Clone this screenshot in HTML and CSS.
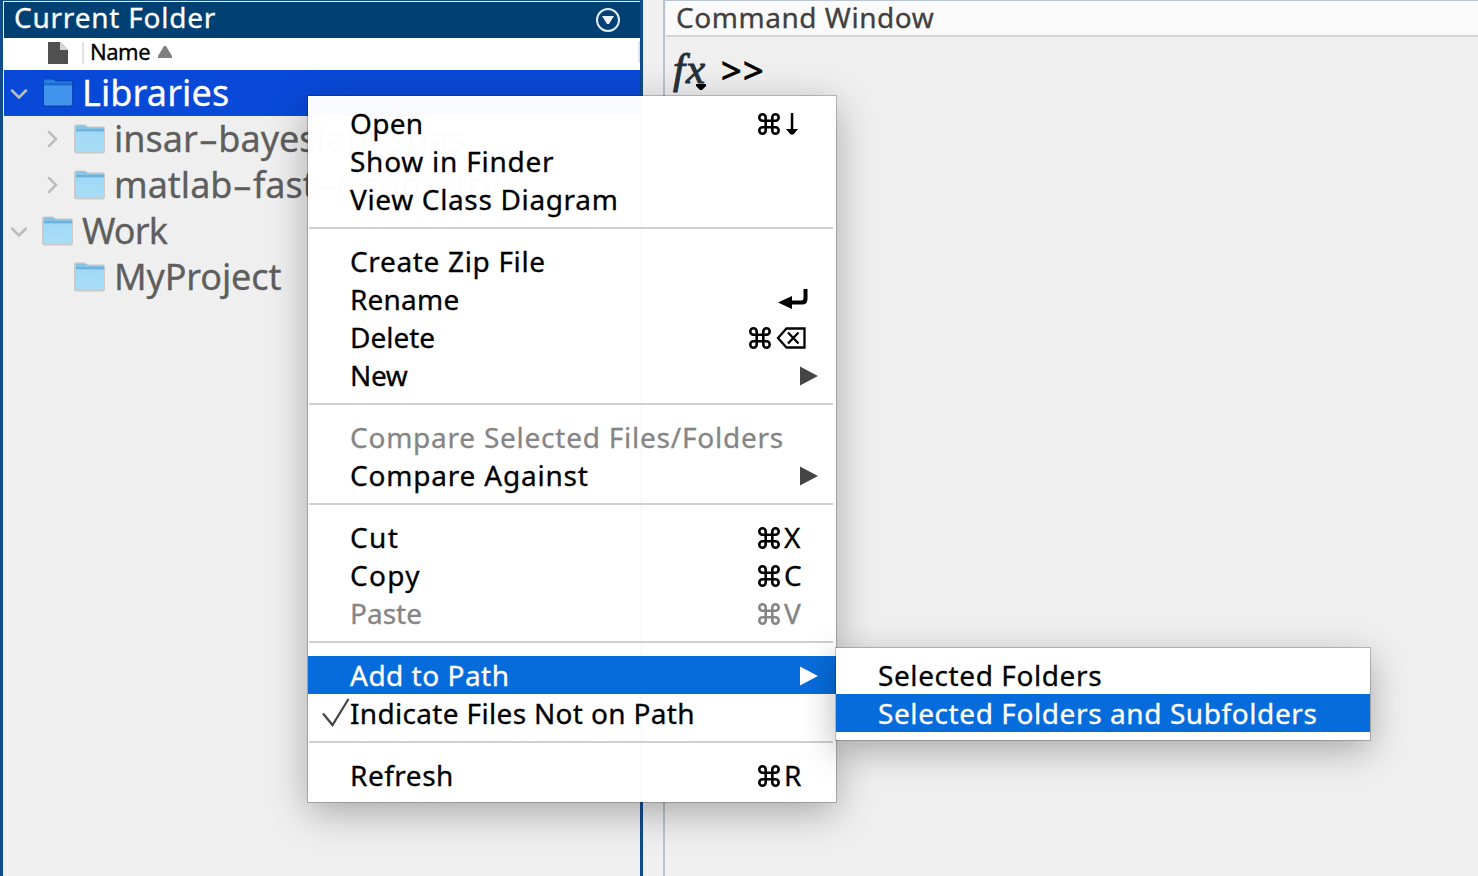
FILE: index.html
```html
<!DOCTYPE html>
<html lang="en">
<head>
<meta charset="utf-8">
<title>Current Folder</title>
<link rel="stylesheet" href="styles.css">
</head>
<body>
<svg class="defs" width="0" height="0" aria-hidden="true">
  <defs>
    <linearGradient id="fold" x1="0" y1="0" x2="0" y2="1"><stop offset="0" stop-color="#a0d8f5"/><stop offset="1" stop-color="#a9def5"/></linearGradient>
    <symbol id="folder" viewBox="0 0 32 30">
      <path d="M0 2.500Q0 .5 2 .5H11L14 2.500H29.500Q31 2.500 31 4.500V27Q31 29.500 29 29.500H3Q0 29.500 0 27Z" fill="#cacaca"/>
      <path d="M2 2.500Q2 1.500 3 1.500H11L14 3.500H29Q30 3.500 30 4.500V8H2Z" fill="#86c4e8"/>
      <path d="M2 5H30V7.500H2Z" fill="#6eb2dc"/>
      <path d="M2 7.500H29.500V26Q29.500 27.500 28 27.500H3.500Q2 27.500 2 26Z" fill="url(#fold)"/>
    </symbol>
    <symbol id="folder-sel" viewBox="0 0 32 30">
      <path d="M1 2.500Q1 .5 3 .5H11L14 2.500H29Q31 2.500 31 4.500V27Q31 29 29 29H3Q1 29 1 27Z" fill="#0b43bd"/>
      <path d="M2 2.500Q2 1.500 3 1.500H11L14 3.500H29Q30 3.500 30 4.500V8H2Z" fill="#297fdc"/>
      <path d="M2 5H30V7.500H2Z" fill="#1769d0"/>
      <path d="M2 7.500H30V26Q30 27.500 28.500 27.500H3.500Q2 27.500 2 26Z" fill="#4193eb"/>
    </symbol>
    <symbol id="down" viewBox="0 0 18 12"><path d="M2 2.500L9 9.500L16 2.500" fill="none" stroke="currentColor" stroke-width="2.500" stroke-linecap="round"/></symbol>
    <symbol id="right" viewBox="0 0 12 18"><path d="M2 2L9 9L2 16" fill="none" stroke="currentColor" stroke-width="2.500" stroke-linecap="round"/></symbol>
    <symbol id="cmd" viewBox="0 0 22 22"><path d="M7.700 7.700H14.300V14.300H7.700ZM7.700 7.700H4.500A3.200 3.200 0 1 1 7.700 4.500ZM14.300 7.700V4.500A3.200 3.200 0 1 1 17.500 7.700ZM14.300 14.300H17.500A3.200 3.200 0 1 1 14.300 17.500ZM7.700 14.300V17.500A3.200 3.200 0 1 1 4.500 14.300Z" fill="none" stroke="currentColor" stroke-width="2.600"/></symbol>
    <symbol id="tri" viewBox="0 0 18 20"><path d="M0 .5L18 10L0 19.500Z" fill="currentColor"/></symbol>
  </defs>
</svg>
<div class="app">
  <section class="folder-panel">
    <header class="panel-title"><span class="title-text">Current Folder</span>
      <svg class="panel-menu" viewBox="0 0 26 26"><circle cx="13" cy="13" r="11" fill="none" stroke="#e4edf3" stroke-width="2"/><path d="M7 9H19L14 17H12Z" fill="#e8eff4"/></svg>
    </header>
    <div class="columns">
      <svg class="file-icon" viewBox="0 0 20 22"><path d="M0 0H12L20 8V22H0Z" fill="#505050"/><path d="M12 0L20 8H12Z" fill="#d5d5d5"/></svg>
      <span class="col-line"></span><span class="col-name">Name</span>
      <svg class="sort" viewBox="0 0 14 12"><path d="M6 0H8L14 10V12H0V10Z" fill="#808080"/></svg>
      <span class="col-end"></span>
    </div>
    <div class="tree">
      <div class="node selected"><svg class="chev-d"><use href="#down"/></svg><svg class="folder"><use href="#folder-sel"/></svg><span class="t-lib">Libraries</span></div>
      <div class="node child"><svg class="chev-r"><use href="#right"/></svg><svg class="folder"><use href="#folder"/></svg><span class="t-insar">insar<span class="dash">-</span>bayesian<span class="dash">-</span>sbas</span></div>
      <div class="node child"><svg class="chev-r"><use href="#right"/></svg><svg class="folder"><use href="#folder"/></svg><span class="t-matlab">matlab<span class="dash">-</span>fast<span class="dash">-</span>geometry</span></div>
      <div class="node"><svg class="chev-d"><use href="#down"/></svg><svg class="folder"><use href="#folder"/></svg><span class="t-work">Work</span></div>
      <div class="node child"><span class="chev-r"></span><svg class="folder"><use href="#folder"/></svg><span class="t-proj">MyProject</span></div>
    </div>
  </section>
  <section class="command-panel">
    <header class="command-title"><span class="t-command">Command Window</span></header>
    <div class="prompt"><span class="fx">fx</span><svg class="fx-arrow" viewBox="0 0 10 6"><path d="M0 0H10V2L6 6H4L0 2Z"/></svg><span class="chevrons">&gt;&gt;</span></div>
  </section>
</div>

<div class="menu main-menu">
  <div class="item"><span class="m-open">Open</span><span class="key"><svg class="cmd"><use href="#cmd"/></svg><svg class="arrow-down" viewBox="0 0 12 22"><path d="M4.800 0H7.300V16H12L7.500 21.500H4.500L0 16H4.800Z"/></svg></span></div>
  <div class="item"><span class="m-show">Show in Finder</span></div>
  <div class="item"><span class="m-view">View Class Diagram</span></div>
  <div class="sep"></div>
  <div class="item"><span class="m-zip">Create Zip File</span></div>
  <div class="item"><span class="m-rename">Rename</span><svg class="enter" viewBox="0 0 30 20"><path d="M0 13.500L14 7V11.500H23Q25.500 11.500 25.500 9V0H29.500V10Q29.500 15.500 24 15.500H14V20Z"/></svg></div>
  <div class="item"><span class="m-delete">Delete</span><span class="key del"><svg class="cmd"><use href="#cmd"/></svg><svg class="erase" viewBox="0 0 30 22"><path d="M2 11L10.500 1.500H28.500V20.500H10.500ZM12 5.500L22.500 16.500M22.500 5.500L12 16.500" fill="none" stroke="currentColor" stroke-width="2.300"/></svg></span></div>
  <div class="item"><span class="m-new">New</span><svg class="tri"><use href="#tri"/></svg></div>
  <div class="sep"></div>
  <div class="item disabled"><span class="m-compare">Compare Selected Files/Folders</span></div>
  <div class="item"><span class="m-against">Compare Against</span><svg class="tri"><use href="#tri"/></svg></div>
  <div class="sep"></div>
  <div class="item"><span class="m-cut">Cut</span><span class="key"><svg class="cmd"><use href="#cmd"/></svg><span class="letter">X</span></span></div>
  <div class="item"><span class="m-copy">Copy</span><span class="key"><svg class="cmd"><use href="#cmd"/></svg><span class="letter">C</span></span></div>
  <div class="item disabled"><span class="m-paste">Paste</span><span class="key"><svg class="cmd"><use href="#cmd"/></svg><span class="letter">V</span></span></div>
  <div class="sep"></div>
  <div class="item active"><span class="m-add">Add to Path</span><svg class="tri"><use href="#tri"/></svg></div>
  <div class="item"><svg class="check" viewBox="0 0 28 30"><path d="M1 15.500L10.500 27L26.500 1" fill="none" stroke="#444" stroke-width="2.200"/></svg><span class="m-indicate">Indicate Files Not on Path</span></div>
  <div class="sep"></div>
  <div class="item"><span class="m-refresh">Refresh</span><span class="key"><svg class="cmd"><use href="#cmd"/></svg><span class="letter">R</span></span></div>
</div>
<div class="menu sub-menu">
  <div class="item"><span class="s-sel">Selected Folders</span></div>
  <div class="item active"><span class="s-sub">Selected Folders and Subfolders</span></div>
</div>
</body>
</html>
```
FILE: styles.css
```css
* { box-sizing: border-box; }
body { margin: 0; width: 1478px; height: 876px; overflow: hidden; background: #efefef; font-family: "Noto Sans", sans-serif; position: relative; }
svg { display: block; flex: none; }
span { white-space: pre; }
.defs { position: absolute; }
.app { display: flex; gap: 20px; height: 876px; }
.folder-panel { width: 643px; border-left: 3px solid #114b8b; border-right: 3px solid #114b8b; border-top: 1px solid #114b8b; flex: none; }
.panel-title { height: 37px; display: flex; align-items: center; justify-content: space-between; padding: 0 19px 4px 10px; background: #004073; color: #fff; border-top: 1px solid #e9f0f5; border-left: 1px solid #e9f0f5; font-size: 28px; line-height: 32px; -webkit-text-stroke: .3px; }
.title-text { letter-spacing: .77px; margin-top: -2px; }
.panel-menu { width: 26px; height: 26px; margin-top: 3px; }
.columns { height: 32px; background: #fff; display: flex; align-items: center; padding: 0 0 4px 45px; font-size: 22px; line-height: 28px; -webkit-text-stroke: .3px; }
.file-icon { width: 20px; height: 22px; margin-top: 2px; }
.col-line { width: 2px; height: 22px; background: #e2e2e2; margin: 2px 6px 0 14px; }
.col-name { letter-spacing: -.5px; margin-top: -2px; }
.sort { width: 14px; height: 12px; margin-left: 8px; }
.col-end { width: 2px; height: 22px; background: #e2e2e2; margin-left: auto; }
.tree { color: #5e5e5e; font-size: 36px; line-height: 46px; -webkit-text-stroke: .3px; margin-left: 1px; }
.node { display: flex; height: 46px; align-items: center; padding-left: 6px; }
.node.child { padding-left: 43px; }
.node.selected { background: #0949d8; color: #fff; }
.chev-d { width: 18px; height: 12px; margin-right: 14px; color: #bdbdbd; margin-top: 2px; }
.chev-r { width: 12px; height: 18px; margin-right: 15px; color: #bdbdbd; }
.folder { width: 32px; height: 30px; margin-right: 8px; }
.dash { display: inline-block; width: 20.500px; text-align: center; transform: scaleX(1.700); }
.t-lib { letter-spacing: .1px; }
.t-work { letter-spacing: -.9px; }
.t-proj { letter-spacing: -.15px; }
.command-panel { flex: 1; border-left: 2px solid #b8c4d2; border-top: 1px solid #b8c4d2; }
.command-title { height: 36px; background: #fafafa; border-bottom: 2px solid #d6d6d6; color: #404040; padding-left: 10px; font-size: 28px; line-height: 32px; margin-left: 1px; -webkit-text-stroke: .3px; }
.t-command { letter-spacing: .54px; }
.prompt { display: flex; height: 64px; padding: 0 0 0 8px; color: #000; position: relative; }
.fx { font: italic 43px/64px "Liberation Serif", serif; color: #26303a; width: 48px; -webkit-text-stroke: 1px; letter-spacing: 1px; }
.fx-arrow { position: absolute; left: 31px; top: 47px; width: 10px; height: 6px; }
.chevrons { font-size: 36px; line-height: 67px; letter-spacing: 1.400px; -webkit-text-stroke: .8px; }
.menu { position: absolute; padding: 8px 0; background: rgba(255,255,255,.98); color: #000; font-size: 28px; line-height: 38px; -webkit-text-stroke: .3px; box-shadow: 0 0 0 1px rgba(0,0,0,.2), 0 10px 36px rgba(0,0,0,.3); }
.main-menu { left: 308px; top: 96px; width: 528px; height: 706px; }
.sub-menu { left: 836px; top: 648px; width: 534px; height: 92px; }
.item { height: 38px; display: flex; align-items: center; justify-content: space-between; padding: 0 18px 0 42px; position: relative; }
.item.active { background: #076cdb; color: #fff; }
.item.disabled { color: #858585; }
.sep { height: 24px; padding: 9px 3px 13px 1px; }
.sep::before { content: ""; display: block; height: 2px; background: #d0d0d0; }
.key { display: flex; align-items: center; width: 60px; }
.cmd { width: 22px; height: 22px; margin: 2px 3px 0 0; }
.key.del { width: 69px; }
.arrow-down { width: 12px; height: 22px; margin: 2px 0 0 3px; }
.enter { width: 30px; height: 20px; margin-right: 10px; }
.erase { width: 30px; height: 22px; margin: 2px 0 0 2px; }
.letter { margin-left: 1px; }
.tri { width: 18px; height: 20px; color: #454545; margin-top: 2px; }
.active .tri { color: #fff; }
.check { position: absolute; left: 14px; top: 4px; width: 28px; height: 30px; }
.m-open { letter-spacing: .3px; }
.m-show { letter-spacing: .75px; }
.m-view { letter-spacing: .65px; }
.m-zip { letter-spacing: .66px; }
.m-rename { letter-spacing: .2px; }
.m-new { letter-spacing: -.4px; }
.m-compare { letter-spacing: .76px; }
.m-against { letter-spacing: .8px; }
.m-cut, .m-copy { letter-spacing: 1.350px; }
.m-add { letter-spacing: .5px; }
.m-indicate { letter-spacing: .33px; }
.m-refresh { letter-spacing: .5px; }
.s-sel, .s-sub { letter-spacing: .59px; }
```
